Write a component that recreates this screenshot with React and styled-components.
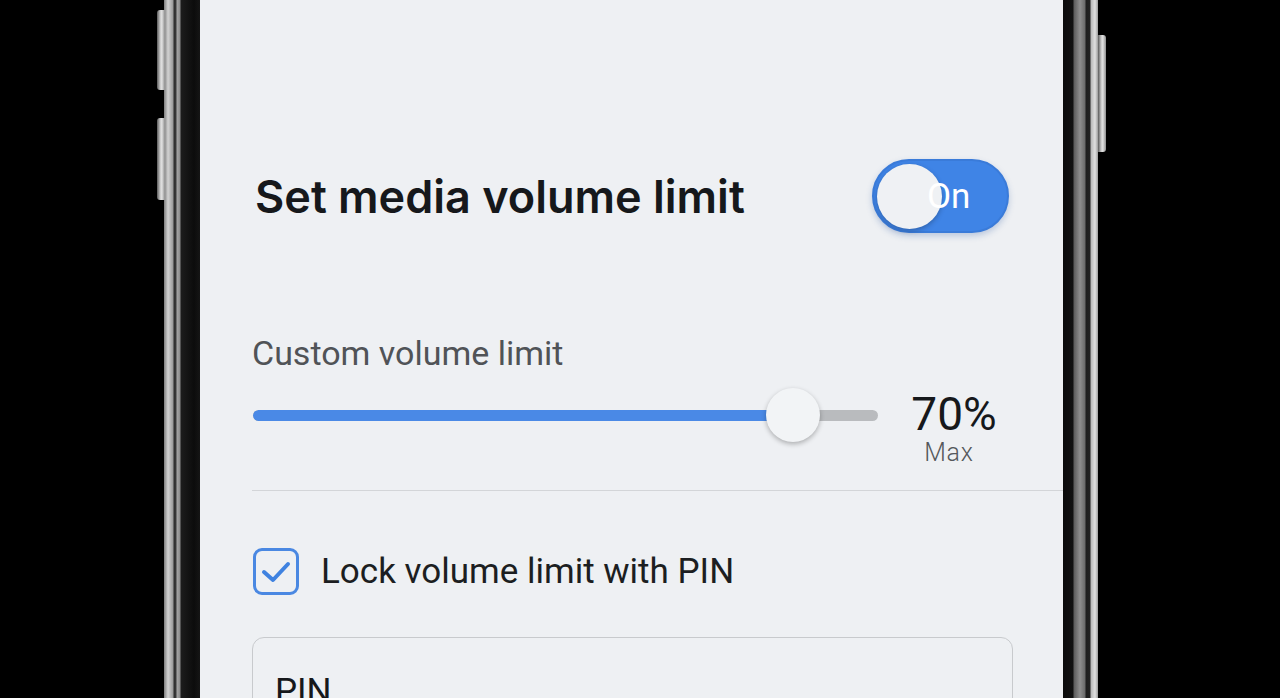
import React from 'react';
import styled, { createGlobalStyle } from 'styled-components';

const GlobalStyle = createGlobalStyle`
  html, body {
    margin: 0;
    padding: 0;
    background: #000;
    overflow: hidden;
  }
  * { box-sizing: border-box; }
`;

const Stage = styled.div`
  width: 1280px;
  height: 698px;
  background: #000;
  overflow: hidden;
  position: relative;
`;

const Phone = styled.div`
  position: absolute;
  left: 164px;
  top: -40px;
  width: 934px;
  height: 800px;
  padding: 0 35px 0 36px;
  background: linear-gradient(
    to right,
    #7d7d7d 0px, #d2d2d2 4px, #9a9a9a 9px,
    #2e2e2e 10px, #3a3a3a 12px,
    #a5a5a5 13px, #8a8a8a 16px,
    #1c1c1c 17px, #0c0c0c 30px, #151515 36px,
    #151515 898px, #0b0b0b 899px, #111 909px,
    #5c5c5c 910px, #8e8e8e 916px, #6a6a6a 921px,
    #1e1e1e 922px, #222 926px,
    #b8b8b8 927px, #e0e0e0 931px, #9c9c9c 934px
  );
`;

const SideButton = styled.div`
  position: absolute;
  top: ${p => p.$top}px;
  height: ${p => p.$height}px;
  width: 8px;
  ${p => (p.$right ? 'right: -8px;' : 'left: -7px;')}
  border-radius: ${p => (p.$right ? '0 3px 3px 0' : '3px 0 0 3px')};
  background: linear-gradient(
    to right,
    #5a5a5a, #c9c9c9 40%, #e2e2e2 60%, #8d8d8d
  );
`;

const Screen = styled.div`
  height: 100%;
  background: #eef0f3;
  padding: 199px 54px 0 53px;
  display: flex;
  flex-direction: column;
  font-family: Roboto, "Liberation Sans", sans-serif;
`;

const HeaderRow = styled.div`
  display: flex;
  align-items: center;
  justify-content: space-between;
  height: 74px;
`;

const Title = styled.h1`
  margin: 0;
  padding-left: 2px;
  font-family: Inter, "Liberation Sans", sans-serif;
  font-weight: 600;
  font-size: 45px;
  letter-spacing: 0;
  color: #16181b;
`;

const Toggle = styled.div`
  position: relative;
  width: 137px;
  height: 74px;
  border-radius: 37px;
  background: #3f84e6;
  border: 2px solid #3a7bd9;
  box-shadow: 0 3px 6px rgba(30, 80, 160, 0.25);
  display: flex;
  align-items: center;
  padding-left: 53px;
`;

const Knob = styled.div`
  position: absolute;
  left: 3px;
  top: 3px;
  width: 65px;
  height: 65px;
  border-radius: 50%;
  background: #eff1f4;
  box-shadow: 0 2px 5px rgba(0, 0, 0, 0.25);
`;

const ToggleLabel = styled.span`
  position: relative;
  color: #fff;
  font-size: 35px;
  font-weight: 400;
`;

const SectionLabel = styled.div`
  margin-top: 101px;
  margin-left: -1px;
  font-size: 34px;
  color: #505357;
  line-height: 38px;
`;

const SliderRow = styled.div`
  display: flex;
  align-items: flex-start;
  margin-top: 16px;
`;

const Slider = styled.div`
  position: relative;
  width: 625px;
  height: 54px;
  display: flex;
  align-items: center;
`;

const Track = styled.div`
  width: 100%;
  height: 11px;
  border-radius: 6px;
  background: #b9bbbe;
  overflow: hidden;
`;

const Fill = styled.div`
  height: 100%;
  background: #4a89e6;
  border-radius: 6px;
`;

const Thumb = styled.div`
  position: absolute;
  top: 0;
  width: 54px;
  height: 54px;
  border-radius: 50%;
  background: #f2f4f6;
  box-shadow: 0 2px 5px rgba(0, 0, 0, 0.28);
`;

const ValueBox = styled.div`
  margin-left: 32px;
  width: 88px;
  display: flex;
  flex-direction: column;
  align-items: center;
  padding-top: 3px;
`;

const Value = styled.div`
  font-size: 46px;
  line-height: 46px;
  color: #16181b;
`;

const ValueNote = styled.div`
  margin-top: 3px;
  margin-left: -10px;
  font-size: 25px;
  font-weight: 300;
  letter-spacing: 0.8px;
  line-height: 26px;
  color: #55585c;
`;

const Divider = styled.div`
  height: 1px;
  background: #d3d5d8;
  margin: 24px -54px 0 -1px;
`;

const CheckRow = styled.label`
  display: flex;
  align-items: center;
  gap: 22px;
  margin-top: 57px;
`;

const CheckBox = styled.div`
  width: 46px;
  height: 47px;
  border: 3.5px solid #4a88e2;
  border-radius: 9px;
  display: flex;
  align-items: center;
  justify-content: center;
`;

const CheckLabel = styled.span`
  font-size: 35px;
  color: #1c1e21;
`;

const Field = styled.div`
  margin-top: 42px;
  margin-left: -1px;
  width: 761px;
  height: 120px;
  border: 1.5px solid #c8cacd;
  border-radius: 12px;
  padding: 33px 22px 0;
`;

const FieldLabel = styled.div`
  font-size: 35px;
  color: #16181b;
`;

export default function App() {
  const level = 70;
  const fill = 86.2;
  return (
    <Stage>
      <GlobalStyle />
      <Phone>
        <SideButton $top={50} $height={80} />
        <SideButton $top={158} $height={82} />
        <SideButton $right $top={75} $height={117} />
        <Screen>
          <HeaderRow>
            <Title>Set media volume limit</Title>
            <Toggle>
              <Knob />
              <ToggleLabel>On</ToggleLabel>
            </Toggle>
          </HeaderRow>

          <SectionLabel>Custom volume limit</SectionLabel>
          <SliderRow>
            <Slider>
              <Track>
                <Fill style={{ width: `${fill}%` }} />
              </Track>
              <Thumb style={{ left: `calc(${fill}% - 26px)` }} />
            </Slider>
            <ValueBox>
              <Value>{level}%</Value>
              <ValueNote>Max</ValueNote>
            </ValueBox>
          </SliderRow>

          <Divider />

          <CheckRow>
            <CheckBox>
              <svg width="30" height="24" viewBox="0 0 30 24" fill="none">
                <path d="M3 12 L12 20 L27 4" stroke="#3f82e0" strokeWidth="4" strokeLinecap="round" strokeLinejoin="round" />
              </svg>
            </CheckBox>
            <CheckLabel>Lock volume limit with PIN</CheckLabel>
          </CheckRow>

          <Field>
            <FieldLabel>PIN</FieldLabel>
          </Field>
        </Screen>
      </Phone>
    </Stage>
  );
}
